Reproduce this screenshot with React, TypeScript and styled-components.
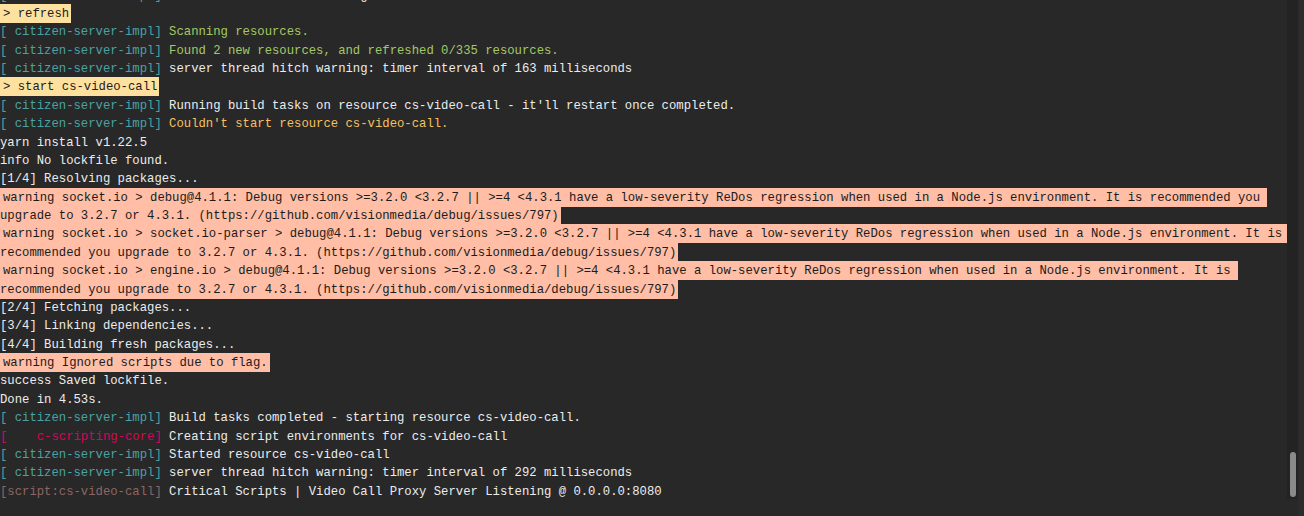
import React from "react";
import styled, { createGlobalStyle } from "styled-components";

const Global = createGlobalStyle`
  html, body { margin: 0; padding: 0; background: #282828; }
  body { overflow: hidden; }
`;

type Tone = "plain" | "green" | "yellow";
type PrefixKind = "impl" | "core" | "script";
type Entry =
  | { kind: "log"; prefix?: PrefixKind; label?: string; tone?: Tone; text: string }
  | { kind: "cmd"; text: string }
  | { kind: "warn"; text: string };

const IMPL = "[ citizen-server-impl]";

const entries: Entry[] = [
  { kind: "log", prefix: "impl", label: IMPL, text: "server thread hitch warning: timer interval of 161 milliseconds" },
  { kind: "cmd", text: "> refresh" },
  { kind: "log", prefix: "impl", label: IMPL, tone: "green", text: "Scanning resources." },
  { kind: "log", prefix: "impl", label: IMPL, tone: "green", text: "Found 2 new resources, and refreshed 0/335 resources." },
  { kind: "log", prefix: "impl", label: IMPL, text: "server thread hitch warning: timer interval of 163 milliseconds" },
  { kind: "cmd", text: "> start cs-video-call" },
  { kind: "log", prefix: "impl", label: IMPL, text: "Running build tasks on resource cs-video-call - it'll restart once completed." },
  { kind: "log", prefix: "impl", label: IMPL, tone: "yellow", text: "Couldn't start resource cs-video-call." },
  { kind: "log", text: "yarn install v1.22.5" },
  { kind: "log", text: "info No lockfile found." },
  { kind: "log", text: "[1/4] Resolving packages..." },
  { kind: "warn", text: "warning socket.io > debug@4.1.1: Debug versions >=3.2.0 <3.2.7 || >=4 <4.3.1 have a low-severity ReDos regression when used in a Node.js environment. It is recommended you upgrade to 3.2.7 or 4.3.1. (https://github.com/visionmedia/debug/issues/797)" },
  { kind: "warn", text: "warning socket.io > socket.io-parser > debug@4.1.1: Debug versions >=3.2.0 <3.2.7 || >=4 <4.3.1 have a low-severity ReDos regression when used in a Node.js environment. It is recommended you upgrade to 3.2.7 or 4.3.1. (https://github.com/visionmedia/debug/issues/797)" },
  { kind: "warn", text: "warning socket.io > engine.io > debug@4.1.1: Debug versions >=3.2.0 <3.2.7 || >=4 <4.3.1 have a low-severity ReDos regression when used in a Node.js environment. It is recommended you upgrade to 3.2.7 or 4.3.1. (https://github.com/visionmedia/debug/issues/797)" },
  { kind: "log", text: "[2/4] Fetching packages..." },
  { kind: "log", text: "[3/4] Linking dependencies..." },
  { kind: "log", text: "[4/4] Building fresh packages..." },
  { kind: "warn", text: "warning Ignored scripts due to flag." },
  { kind: "log", text: "success Saved lockfile." },
  { kind: "log", text: "Done in 4.53s." },
  { kind: "log", prefix: "impl", label: IMPL, text: "Build tasks completed - starting resource cs-video-call." },
  { kind: "log", prefix: "core", label: "[    c-scripting-core]", text: "Creating script environments for cs-video-call" },
  { kind: "log", prefix: "impl", label: IMPL, text: "Started resource cs-video-call" },
  { kind: "log", prefix: "impl", label: IMPL, text: "server thread hitch warning: timer interval of 292 milliseconds" },
  { kind: "log", prefix: "script", label: "[script:cs-video-call]", text: "Critical Scripts | Video Call Proxy Server Listening @ 0.0.0.0:8080" },
];

const prefixColors: Record<PrefixKind, string> = {
  impl: "#4aa3a3",
  core: "#d3075a",
  script: "#8c6666",
};

const toneColors: Record<Tone, string> = {
  plain: "#ececec",
  green: "#a4c864",
  yellow: "#f5c061",
};

const Page = styled.div`
  display: flex;
  width: 1304px;
  height: 516px;
  background: #282828;
  overflow: hidden;
`;

const Main = styled.div`
  flex: 1;
  display: flex;
  flex-direction: column;
  min-width: 0;
`;

const Body = styled.div`
  height: 501px;
  display: flex;
  min-height: 0;
`;

const Log = styled.div`
  flex: 1;
  min-width: 0;
  overflow: hidden;
  display: flex;
  flex-direction: column;
  justify-content: flex-end;
  font-family: "Liberation Mono", "Cousine", monospace;
  font-size: 12.25px;
  line-height: 18.375px;
  color: #ececec;
  white-space: pre-wrap;
  word-break: normal;
`;

const Line = styled.div`
  flex: none;
`;

const Prefix = styled.span<{ $kind: PrefixKind }>`
  color: ${(p) => prefixColors[p.$kind]};
`;

const Message = styled.span<{ $tone: Tone }>`
  color: ${(p) => toneColors[p.$tone]};
`;

const Highlight = styled.span<{ $variant: "cmd" | "warn" }>`
  background: ${(p) => (p.$variant === "cmd" ? "#fee19f" : "#ffbea5")};
  color: #1c1c1c;
  padding: 3px 2px 2px 3px;
`;

const Track = styled.div`
  width: 11px;
  margin-bottom: 2px;
  background: #232323;
  display: flex;
  flex-direction: column;
  justify-content: flex-end;
  align-items: center;
  padding-bottom: 2px;
  box-sizing: border-box;
`;

const Thumb = styled.div`
  width: 6px;
  height: 45px;
  border-radius: 3px;
  background: #8a8a8a;
`;

const Footer = styled.div`
  height: 15px;
  background: #282828;
`;

const Edge = styled.div`
  width: 6px;
  background: #2b2b2b;
`;

export default function App() {
  return (
    <>
      <Global />
      <Page>
        <Main>
          <Body>
            <Log>
              {entries.map((e, i) => {
                if (e.kind === "cmd" || e.kind === "warn") {
                  return (
                    <Line key={i}>
                      <Highlight $variant={e.kind}>{e.text}</Highlight>
                    </Line>
                  );
                }
                return (
                  <Line key={i}>
                    {e.prefix && e.label ? (
                      <>
                        <Prefix $kind={e.prefix}>{e.label}</Prefix>{" "}
                      </>
                    ) : null}
                    <Message $tone={e.tone ?? "plain"}>{e.text}</Message>
                  </Line>
                );
              })}
            </Log>
            <Track>
              <Thumb />
            </Track>
          </Body>
          <Footer />
        </Main>
        <Edge />
      </Page>
    </>
  );
}
